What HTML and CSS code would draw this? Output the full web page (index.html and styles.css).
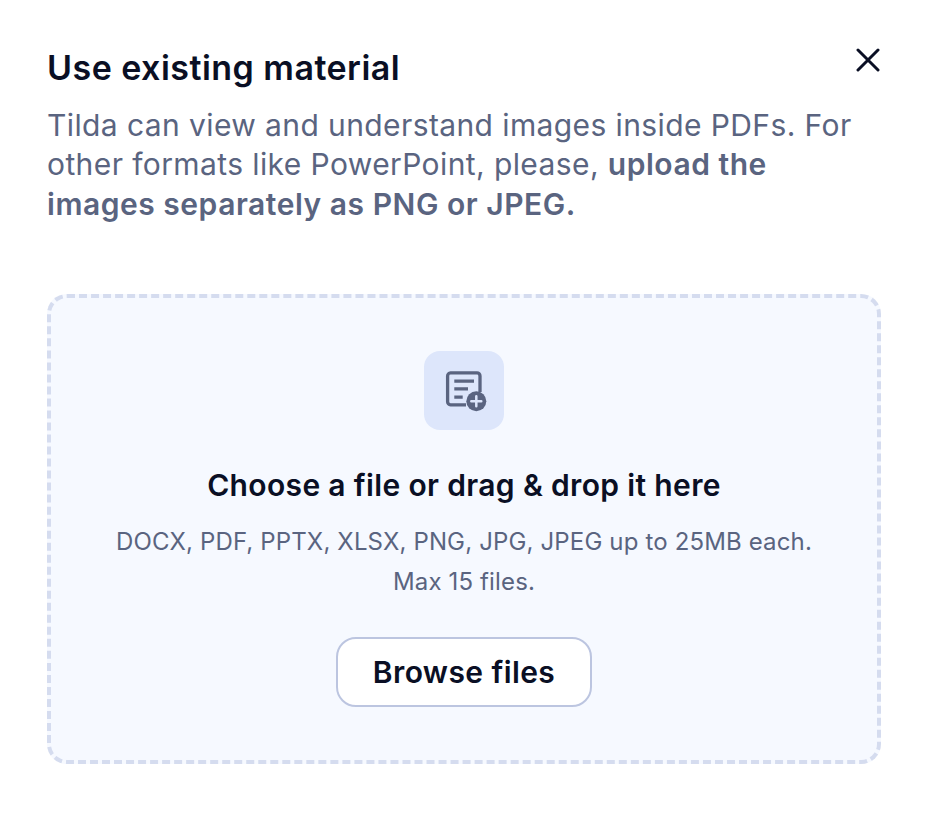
FILE: index.html
```html
<!DOCTYPE html>
<html lang="en">
<head>
    <meta charset="UTF-8">
    <meta name="viewport" content="width=device-width, initial-scale=1.0">
    <title>Use existing material</title>
    <link rel="stylesheet" href="styles.css">
</head>
<body>
    <div class="dialog">
        <div class="dialog-header">
            <h1 class="dialog-title">Use existing material</h1>
            <button class="close-btn" aria-label="Close">
                <svg width="24" height="24" viewBox="0 0 24 24" fill="none" stroke="#0a0f24" stroke-width="3" stroke-linecap="round">
                    <path d="M2 2L22 22M22 2L2 22"/>
                </svg>
            </button>
        </div>
        <p class="dialog-text">Tilda can view and understand images inside PDFs. For other formats like PowerPoint, please, <strong>upload the images separately as PNG or JPEG.</strong></p>

        <div class="dropzone">
            <div class="file-icon">
                <svg width="40" height="40" viewBox="0 0 40 40" fill="none">
                    <path d="M22 34.800H6.500A3 3 0 0 1 3.600 31.800V5.900A3 3 0 0 1 6.500 2.900H33A3 3 0 0 1 36 5.900V22" stroke="#5a6480" stroke-width="3.300"/>
                    <path d="M10.300 11.200H30M10.300 18.800H24M10.300 27.200H18.700" stroke="#5a6480" stroke-width="3.300"/>
                    <circle cx="32.300" cy="31.200" r="10" fill="#5a6480"/>
                    <path d="M32.300 26.200V36.200M27.300 31.200H37.300" stroke="#dde6fb" stroke-width="2.500" stroke-linecap="round"/>
                </svg>
            </div>
            <h2 class="dropzone-title">Choose a file or drag &amp; drop it here</h2>
            <p class="dropzone-hint">DOCX, PDF, PPTX, XLSX, PNG, JPG, JPEG up to 25MB each.<br>Max 15 files.</p>
            <button class="browse-btn">Browse files</button>
        </div>
    </div>
</body>
</html>
```

FILE: styles.css
```css
body {
    margin: 0;
    background-color: #fff;
    font-family: Inter, "Noto Sans", sans-serif;
}
.dialog {
    padding: 48px 47px 0;
}
.dialog-header {
    display: flex;
    justify-content: space-between;
    align-items: flex-start;
}
.dialog-title {
    margin: 0;
    font-size: 34px;
    line-height: 40px;
    letter-spacing: 0.47px;
    font-weight: 600;
    color: #0a0f24;
}
.close-btn {
    padding: 0;
    margin-right: 1px;
    border: none;
    background: none;
    display: flex;
}
.dialog-text {
    margin: 0;
    max-width: 820px;
    padding-top: 17.6px;
    font-size: 30px;
    line-height: 39.5px;
    letter-spacing: 0.4px;
    color: #5a6480;
}
.dialog-text strong {
    font-weight: 600;
    letter-spacing: 0.53px;
}
.dropzone {
    margin-top: 69.9px;
    height: 470px;
    box-sizing: border-box;
    padding-top: 53px;
    border: 4px dashed #d5dcef;
    border-radius: 20px;
    background-color: #f6f9ff;
    display: flex;
    flex-direction: column;
    align-items: center;
    text-align: center;
}
.file-icon {
    width: 80px;
    height: 79px;
    border-radius: 16px;
    background-color: #dde6fb;
    display: flex;
    align-items: center;
    justify-content: center;
}
.file-icon svg {
    overflow: visible;
}
.dropzone-title {
    margin: 35px 0 0;
    font-size: 30px;
    line-height: 40px;
    letter-spacing: 0.35px;
    font-weight: 600;
    color: #0a0f24;
}
.dropzone-hint {
    margin: 17px 0 0;
    font-size: 24px;
    line-height: 40px;
    letter-spacing: 0.15px;
    color: #5a6480;
}
.browse-btn {
    margin-top: 35px;
    width: 256px;
    height: 70px;
    border: 2px solid #bcc5e0;
    border-radius: 20px;
    background-color: #fff;
    font-family: inherit;
    font-size: 30px;
    letter-spacing: 0.4px;
    font-weight: 600;
    color: #0a0f24;
}
```
